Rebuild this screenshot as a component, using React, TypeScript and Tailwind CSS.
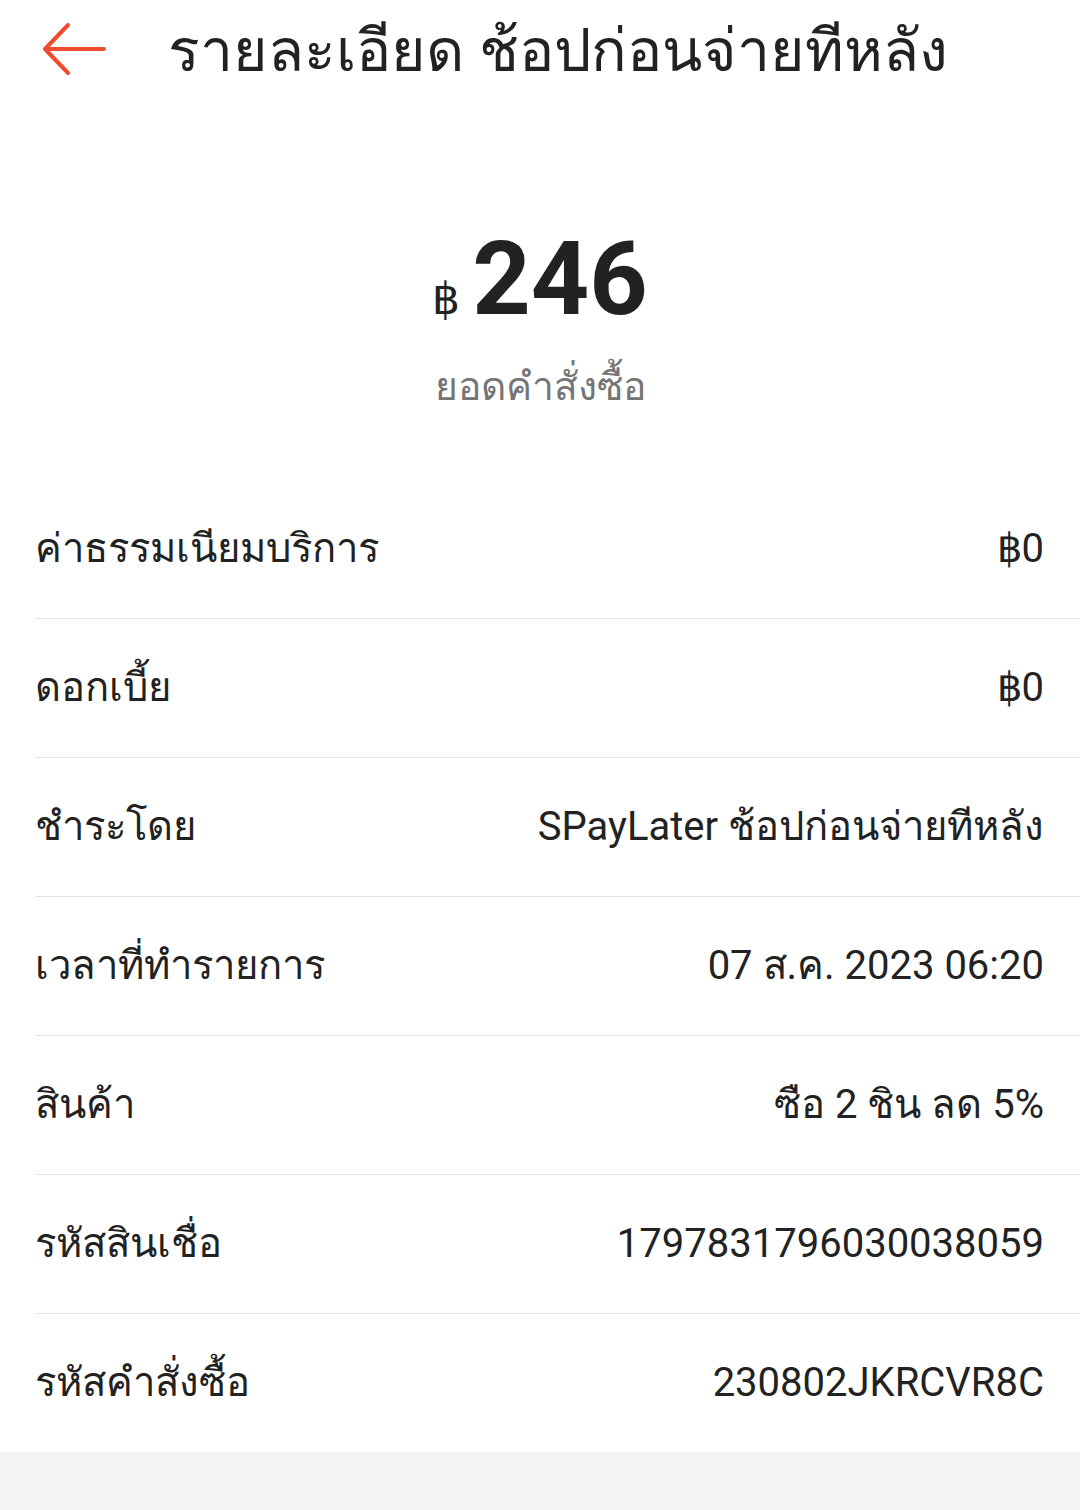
import React from "react";

const rows: [string, string][] = [
  ["ค่าธรรมเนียมบริการ", "฿0"],
  ["ดอกเบี้ย", "฿0"],
  ["ชำระโดย", "SPayLater ช้อปก่อนจ่ายทีหลัง"],
  ["เวลาที่ทำรายการ", "07 ส.ค. 2023 06:20"],
  ["สินค้า", "ซือ 2 ชิน ลด 5%"],
  ["รหัสสินเชื่อ", "1797831796030038059"],
  ["รหัสคำสั่งซื้อ", "230802JKRCVR8C"],
];

export default function App() {
  return (
    <div
      className="w-[1080px] h-[1510px] bg-[#f5f5f5] text-[#222222]"
      style={{ fontFamily: "Roboto, sans-serif" }}
    >
      <div className="bg-white">
        <header className="h-[100px] flex items-center pl-[42px]">
          <svg width="64" height="56" viewBox="0 0 64 56" fill="none" className="shrink-0">
            <path
              d="M62 27H3M26 3L3 27l23 24"
              stroke="#ee4d2d"
              strokeWidth="4"
              strokeLinecap="round"
              strokeLinejoin="round"
            />
          </svg>
          <h1 className="ml-[62px] text-[59px] leading-none text-[#222222]">
            รายละเอียด ช้อปก่อนจ่ายทีหลัง
          </h1>
        </header>

        <section className="flex flex-col items-center pt-[128px] pb-[72px]">
          <div className="flex items-baseline">
            <span className="text-[44px] leading-none mr-[12px]">฿</span>
            <span className="text-[102px] font-bold leading-none">246</span>
          </div>
          <div className="mt-[38px] text-[39px] leading-none text-[#757575]">ยอดคำสั่งซื้อ</div>
        </section>

        <div className="pl-[35px]">
          {rows.map(([label, value], i) => (
            <div
              key={label}
              className={
                "h-[139px] flex items-center justify-between pr-[36px] text-[40px] " +
                (i > 0 ? "border-t border-[#e5e5e5]" : "")
              }
            >
              <span>{label}</span>
              <span>{value}</span>
            </div>
          ))}
        </div>
      </div>
    </div>
  );
}
